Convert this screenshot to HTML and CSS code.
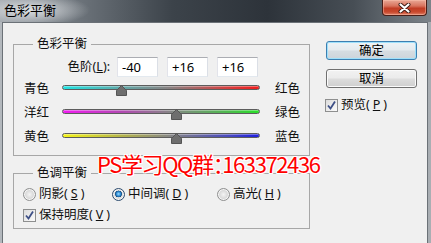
FILE: index.html
```html
<!DOCTYPE html>
<html lang="zh-CN">

<head>
    <meta charset="UTF-8">
    <title>色彩平衡</title>
    <link rel="stylesheet" href="styles.css">
</head>

<body>
    <div class="window">

        <!-- 标题栏 -->
        <div class="titlebar">
            <span class="title">色彩平衡</span>
            <div class="close-btn">
                <svg width="13" height="10" viewBox="0 0 13 10">
                    <path d="M2.5 1.5 L10.5 8.5 M10.5 1.5 L2.5 8.5" stroke="#3b1a14" stroke-width="4" stroke-linecap="round" fill="none"/>
                    <path d="M2.5 1.5 L10.5 8.5 M10.5 1.5 L2.5 8.5" stroke="#fff" stroke-width="2.2" stroke-linecap="round" fill="none"/>
                </svg>
            </div>
        </div>

        <div class="client">
            <div class="main">

                <!-- 色彩平衡 -->
                <fieldset class="group">
                    <legend>色彩平衡</legend>
                    <div class="levels">
                        <label class="levels-label">色阶(<u>L</u>):</label>
                        <input class="num" type="text" value="-40">
                        <input class="num" type="text" value="+16">
                        <input class="num" type="text" value="+16">
                    </div>

                    <div class="slider-row">
                        <span class="slider-label">青色</span>
                        <div class="slider">
                            <div class="track track-cr"></div>
                            <svg class="thumb" style="left: 30%" width="11" height="11" viewBox="0 0 11 11"><polygon points="5.5,0.5 10.5,5.5 10.5,10.5 0.5,10.5 0.5,5.5"/></svg>
                        </div>
                        <span class="slider-label right">红色</span>
                    </div>
                    <div class="slider-row">
                        <span class="slider-label">洋红</span>
                        <div class="slider">
                            <div class="track track-mg"></div>
                            <svg class="thumb" style="left: 58%" width="11" height="11" viewBox="0 0 11 11"><polygon points="5.5,0.5 10.5,5.5 10.5,10.5 0.5,10.5 0.5,5.5"/></svg>
                        </div>
                        <span class="slider-label right">绿色</span>
                    </div>
                    <div class="slider-row">
                        <span class="slider-label">黄色</span>
                        <div class="slider">
                            <div class="track track-yb"></div>
                            <svg class="thumb" style="left: 58%" width="11" height="11" viewBox="0 0 11 11"><polygon points="5.5,0.5 10.5,5.5 10.5,10.5 0.5,10.5 0.5,5.5"/></svg>
                        </div>
                        <span class="slider-label right">蓝色</span>
                    </div>
                </fieldset>

                <!-- 色调平衡 -->
                <fieldset class="group tone">
                    <legend>色调平衡</legend>
                    <div class="radio-row">
                        <span class="opt"><span class="radio"></span>阴影(<u>S</u>)</span>
                        <span class="opt"><span class="radio checked"></span>中间调(<u>D</u>)</span>
                        <span class="opt"><span class="radio"></span>高光(<u>H</u>)</span>
                    </div>
                    <div class="check-row keep">
                        <span class="checkbox">
                            <svg width="11" height="11" viewBox="0 0 11 11"><path d="M2 5.5 L4.5 8.5 L9 1.5" stroke="#3d4f86" stroke-width="1.8" fill="none"/></svg>
                        </span>保持明度(<u>V</u>)
                    </div>
                </fieldset>
            </div>

            <!-- 按钮 -->
            <div class="side">
                <div class="btn btn-default">确定</div>
                <div class="btn">取消</div>
                <div class="check-row preview">
                    <span class="checkbox">
                        <svg width="11" height="11" viewBox="0 0 11 11"><path d="M2 5.5 L4.5 8.5 L9 1.5" stroke="#3d4f86" stroke-width="1.8" fill="none"/></svg>
                    </span>预览(<u>P</u>)
                </div>
            </div>
        </div>

        <div class="watermark">PS学习QQ群：163372436</div>
    </div>
</body>

</html>
```

FILE: styles.css
```css
* {
    box-sizing: border-box;
}

body {
    margin: 0;
    font-family: "Noto Sans", "Noto Sans CJK SC", sans-serif;
    font-size: 12.5px;
    color: #111;
    background: #fff;
}

.window {
    position: relative;
    width: 431px;
    height: 243px;
    overflow: hidden;
    display: flex;
    flex-direction: column;
    background: linear-gradient(90deg, #b3b8bd 0%, #9aa0a6 60%, #a9aeb3 100%);
}

/* 标题栏 */
.titlebar {
    flex: none;
    height: 22px;
    display: flex;
    justify-content: space-between;
    align-items: flex-start;
    padding-left: 4px;
    background:
        radial-gradient(ellipse 60px 16px at 30px 10px, rgba(225, 228, 231, 0.95), rgba(225, 228, 231, 0) 100%),
        linear-gradient(90deg, #9ea4aa 0%, #6d747b 18%, #3c434a 40%, #2d333a 62%, #474e55 82%, #7d848a 100%);
}

.title {
    margin-top: 3px;
    line-height: 15px;
    font-size: 13px;
    color: #000;
}

.close-btn {
    width: 45px;
    height: 16px;
    margin-right: 4px;
    border: 1px solid #4a1e17;
    border-top: none;
    border-radius: 0 0 4px 4px;
    background: linear-gradient(#e9a896 0%, #d8735d 40%, #c13d25 55%, #c9492d 80%, #e0826a 100%);
    box-shadow: inset 0 0 0 1px rgba(255, 200, 180, 0.45);
    display: flex;
    align-items: center;
    justify-content: center;
}

/* 对话框主体 */
.client {
    flex: 1;
    display: flex;
    margin: 0 3px 0 2px;
    padding: 14px 0 0 10px;
    background: #f0f0f0;
    border: 1px solid #6b7177;
    border-bottom: none;
}

.main {
    width: 297px;
    flex: none;
}

.group {
    margin: 0;
    width: 297px;
    min-width: 0;
    padding: 6px 0 6px 0;
    border: 1px solid #a7a7a7;
}

.group legend {
    margin-left: 19px;
    padding: 0 4px;
    line-height: 14px;
}

.tone {
    margin-top: 10px;
    padding-bottom: 5px;
}

.levels {
    display: flex;
    align-items: center;
    height: 20px;
}

.levels-label {
    width: 96px;
    margin-right: 7px;
    text-align: right;
    line-height: 14px;
}

.num {
    width: 41px;
    height: 20px;
    margin: 0 9px 0 0;
    padding: 0 4px;
    font-family: "Noto Sans", "Noto Sans CJK SC", sans-serif;
    font-size: 13px;
    color: #000;
    background: #fff;
    border: 1px solid;
    border-color: #abadb3 #dbdfe6 #e3e9ef #e2e3ea;
    outline: none;
}

/* 滑块 */
.slider-row {
    display: flex;
    align-items: center;
    height: 24px;
    padding-left: 10px;
}

.slider-row:first-of-type {
    margin-top: 2px;
}

.slider-label {
    width: 38px;
    line-height: 14px;
}

.slider-label.right {
    width: auto;
    margin-left: 15px;
}

.slider {
    position: relative;
    width: 198px;
    height: 14px;
}

.track {
    margin-top: 3px;
    height: 5px;
    border: 1px solid #5d5d5d;
    border-radius: 3px;
    box-shadow: inset 0 1px 0 rgba(255, 255, 255, 0.35);
}

.track-cr {
    background: linear-gradient(90deg, #1fe3e3 0%, #5fa8a8 30%, #8a8080 55%, #d83c3c 85%, #f01c1c 100%);
}

.track-mg {
    background: linear-gradient(90deg, #f01cf0 0%, #b24ab2 30%, #868686 55%, #4cbc4c 85%, #28e028 100%);
}

.track-yb {
    background: linear-gradient(90deg, #f4f41a 0%, #b4b44a 30%, #868686 55%, #4848c0 85%, #1e1ee0 100%);
}

.thumb {
    position: absolute;
    top: 3px;
    margin-left: -5.5px;
    fill: #6e6e6e;
    stroke: #555;
    stroke-width: 1;
}

/* 单选 / 复选 */
.radio-row {
    display: grid;
    grid-template-columns: 89px 105px auto;
    height: 16px;
    padding-left: 9px;
    align-items: center;
}

.opt {
    display: flex;
    align-items: center;
    gap: 3px;
    line-height: 14px;
}

.radio {
    width: 13px;
    height: 13px;
    border-radius: 50%;
    border: 1px solid #8e8f8f;
    background: radial-gradient(circle at 50% 50%, #f4f4f4 0%, #d8d8d8 55%, #e8e8e8 100%);
    box-shadow: inset 0 0 0 1px #f6f6f6;
}

.radio.checked {
    border-color: #2c4b6e;
    background:
        radial-gradient(circle at 50% 45%, #9fdcff 0%, #2f8ed6 25%, #1b4f82 40%, rgba(0, 0, 0, 0) 44%),
        radial-gradient(circle, #e9e9e9 0%, #d0d0d0 100%);
}

.check-row {
    display: flex;
    align-items: center;
    gap: 3px;
    height: 16px;
    line-height: 14px;
}

.keep {
    margin-top: 5px;
    padding-left: 9px;
}

.checkbox {
    width: 13px;
    height: 13px;
    border: 1px solid #8e8f8f;
    background: linear-gradient(135deg, #dcdcdc, #fbfbfb);
    display: flex;
    align-items: center;
    justify-content: center;
}

/* 右侧按钮 */
.side {
    margin-left: 16px;
    margin-top: 4px;
    width: 91px;
}

.btn {
    height: 19px;
    margin-bottom: 9px;
    border: 1px solid #707070;
    border-radius: 3px;
    background: linear-gradient(#f2f2f2 0%, #ebebeb 48%, #dddddd 52%, #cfcfcf 100%);
    box-shadow: inset 0 0 0 1px #fbfbfb;
    display: flex;
    align-items: center;
    justify-content: center;
    line-height: 14px;
    color: #000;
}

.btn-default {
    border-color: #3c7fb1;
    background: linear-gradient(#eef3f6 0%, #e4eaee 48%, #d6dde2 52%, #cdd4da 100%);
    box-shadow: inset 0 0 0 1px #9ee0fb;
}

.preview {
    margin-top: 7px;
    margin-left: -1px;
}

/* 水印 */
.watermark {
    position: absolute;
    left: 97px;
    top: 152px;
    font-family: "Noto Sans CJK SC", sans-serif;
    font-size: 22px;
    line-height: 22px;
    letter-spacing: -1.4px;
    font-feature-settings: "palt";
    color: #ff0000;
    white-space: nowrap;
    text-shadow: 1px 0 0 #fff, -1px 0 0 #fff, 0 1px 0 #fff, 0 -1px 0 #fff,
        1px 1px 0 #fff, -1px -1px 0 #fff, 1px -1px 0 #fff, -1px 1px 0 #fff;
}
```
